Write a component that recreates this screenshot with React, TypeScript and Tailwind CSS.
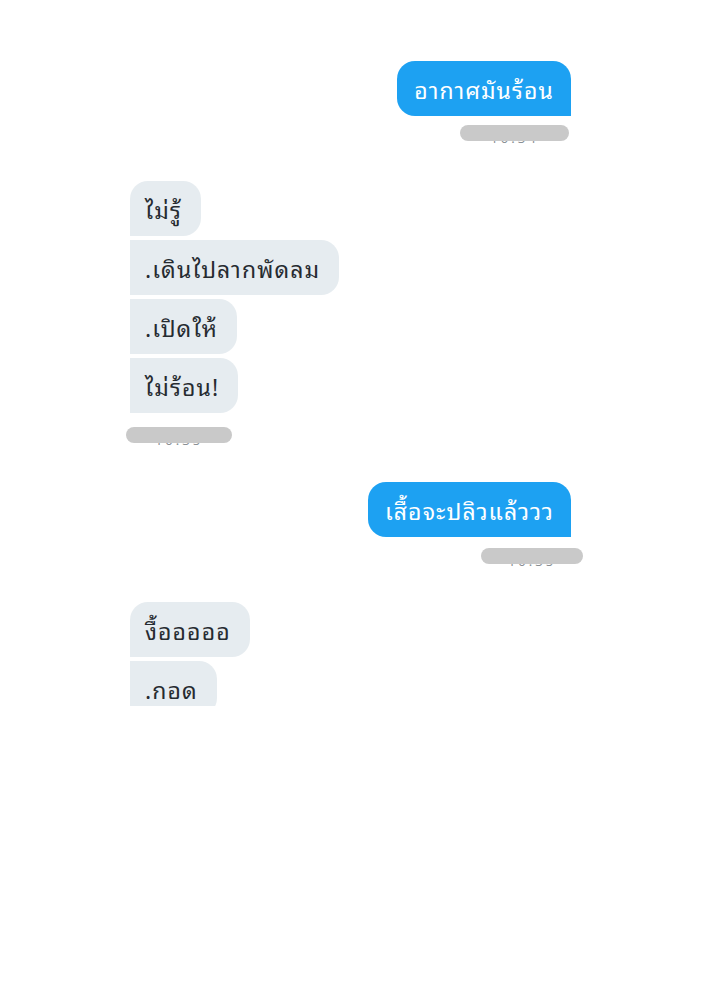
import React from "react";

const font = {
  fontFamily:
    '"Noto Sans Thai Looped", Garuda, Loma, Tahoma, "Noto Sans Thai", "Noto Sans", "Liberation Sans", sans-serif',
};

function Stamp({ className, text }: { className: string; text: string }) {
  return (
    <div className={`relative h-[22px] ${className}`}>
      <span className="absolute left-1/2 top-[5px] -translate-x-1/2 text-[13px] leading-[16px] text-[#8a8f94] tracking-[3px]">
        {text}
      </span>
      <div className="absolute inset-x-0 top-0 h-[16px] rounded-full bg-[#c9c9c9] blur-[0.6px]" />
    </div>
  );
}

function Mine({ text }: { text: string }) {
  return (
    <div className="flex justify-end">
      <div className="h-[55px] flex items-center px-[17px] pt-[2px] bg-[#1da1f2] text-white text-[23px] tracking-[1.1px] rounded-[18px] rounded-br-none">
        {text}
      </div>
    </div>
  );
}

function Theirs({ text, first }: { text: string; first?: boolean }) {
  return (
    <div className="flex justify-start">
      <div
        className={`h-[55px] flex items-center pl-[15px] pr-[19px] pt-[2px] bg-[#e6ecf0] text-[#262b30] text-[23px] tracking-[1.1px] rounded-r-[18px] ${
          first ? "rounded-tl-[18px]" : ""
        }`}
      >
        {text}
      </div>
    </div>
  );
}

export default function App() {
  return (
    <div className="w-[719px] h-[1006px] bg-white overflow-hidden" style={font}>
      <div className="ml-[130px] w-[441px] pt-[61px] flex flex-col">
        <Mine text="อากาศมันร้อน" />
        <div className="flex justify-end mt-[9px] mr-[2px]">
          <Stamp className="w-[109px]" text="10:34" />
        </div>

        <div className="mt-[34px] flex flex-col gap-[4px]">
          <Theirs text="ไม่รู้" first />
          <Theirs text=".เดินไปลากพัดลม" />
          <Theirs text=".เปิดให้" />
          <Theirs text="ไม่ร้อน!" />
        </div>
        <div className="flex justify-start mt-[14px] -ml-[4px]">
          <Stamp className="w-[106px]" text="10:35" />
        </div>

        <div className="mt-[33px]">
          <Mine text="เสื้อจะปลิวแล้ววว" />
        </div>
        <div className="flex justify-end mt-[11px] -mr-[12px]">
          <Stamp className="w-[102px]" text="10:35" />
        </div>

        <div className="mt-[32px] h-[104px] overflow-hidden flex flex-col gap-[4px]">
          <Theirs text="งื้อออออ" first />
          <Theirs text=".กอด" />
        </div>
      </div>
    </div>
  );
}
